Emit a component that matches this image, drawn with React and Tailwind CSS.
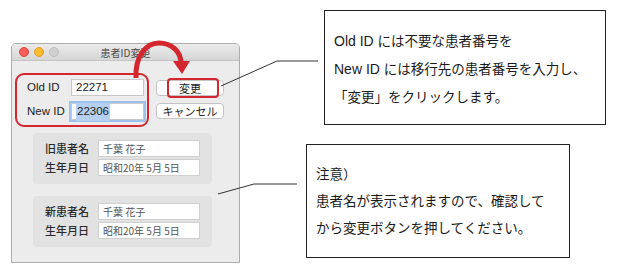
const jp = "font-['Noto_Sans_CJK_JP','Noto_Sans',sans-serif]";
const latin = "font-['Liberation_Sans','Noto_Sans_CJK_JP',sans-serif]";

function Field({ children, className = "" }) {
  return (
    <div
      className={`h-[17px] bg-white border border-[#c9c9c9] flex items-center pl-[4px] text-[11.5px] text-[#222] ${className}`}
    >
      {children}
    </div>
  );
}

function PatientGroup({ label }) {
  return (
    <div className="ml-[21px] w-[179px] h-[51px] rounded-[4px] bg-[#e2e2e2] pt-[7px] pl-[12px] flex flex-col gap-[2px]">
      {[
        [label, "千葉 花子"],
        ["生年月日", "昭和20年 5月 5日"],
      ].map(([name, value]) => (
        <div key={name} className="flex items-center">
          <span className={`w-[53px] text-[11px] font-medium text-[#2a2a2a] ${jp}`}>{name}</span>
          <div className={`w-[102px] h-[17px] bg-white border border-[#d0d0d0] flex items-center pl-[4px] text-[10px] text-[#555] ${jp}`}>
            {value}
          </div>
        </div>
      ))}
    </div>
  );
}

export default function App() {
  return (
    <div className={`relative w-[617px] h-[273px] bg-white overflow-hidden ${jp}`}>
      {/* Window */}
      <div className="pt-[43px] pl-[11px]">
        <div className="w-[229px] h-[220px] border border-[#adadad] rounded-t-[5px] bg-[#ececec] flex flex-col">
          <div className="relative h-[17px] border-b border-[#c4c4c4] bg-gradient-to-b from-[#ebebeb] to-[#d6d6d6] rounded-t-[4px] flex items-center">
            <div className="flex gap-[5px] pl-[7px]">
              <span className="w-[10px] h-[10px] rounded-full bg-[#fc5f57] border border-[#e2463f]" />
              <span className="w-[10px] h-[10px] rounded-full bg-[#fdbc2e] border border-[#dfa023]" />
              <span className="w-[10px] h-[10px] rounded-full bg-[#d0d0d0] border border-[#bdbdbd]" />
            </div>
            <span className="absolute inset-0 flex items-center justify-center text-[10px] text-[#4a4a4a]">
              患者ID変更
            </span>
          </div>

          <div className="flex">
            {/* ID inputs */}
            <div className="ml-[3px] mt-[12px] w-[134px] h-[54px] border-2 border-[#d3262e] rounded-[9px] pt-[4px] pl-[10px] flex flex-col gap-[7px]">
              <div className="flex items-center">
                <span className={`w-[44px] text-[11.5px] text-[#222] ${latin}`}>Old ID</span>
                <Field className={`w-[73px] ${latin}`}>22271</Field>
              </div>
              <div className="flex items-center">
                <span className={`w-[44px] text-[11.5px] text-[#222] ${latin}`}>New ID</span>
                <Field className={`w-[73px] border-[#7fa9df] ring-2 ring-[#9dc0ec] ${latin}`}>
                  <span className="bg-[#b5d0f0] px-[1px]">22306</span>
                </Field>
              </div>
            </div>

            {/* Buttons */}
            <div className="ml-[7px] mt-[19px] flex flex-col gap-[7px]">
              <div className="relative w-[68px] h-[16px] bg-white border border-[#c4c4c4] rounded-[4px] flex items-center justify-center text-[11px] text-[#222]">
                変更
                <span className="absolute left-[10px] top-[-3px] w-[52px] h-[20px] border-2 border-[#d3262e] rounded-[4px]" />
              </div>
              <div className="w-[68px] h-[16px] bg-white border border-[#c4c4c4] rounded-[4px] flex items-center justify-center text-[11px] text-[#222]">
                キャンセル
              </div>
            </div>
          </div>

          <div className="mt-[6px] flex flex-col gap-[12px]">
            <PatientGroup label="旧患者名" />
            <PatientGroup label="新患者名" />
          </div>
        </div>
      </div>

      {/* Callouts */}
      <div className="absolute left-[324px] top-[10px] w-[282px] h-[115px] border border-[#222] pt-[16px] pl-[9px] text-[13.5px] leading-[27px] text-[#1a1a1a]">
        <p>
          <span className={`text-[14px] ${latin}`}>Old ID </span>には不要な患者番号を
        </p>
        <p>
          <span className={`text-[14px] ${latin}`}>New ID </span>には移行先の患者番号を入力し、
        </p>
        <p>「変更」をクリックします。</p>
      </div>

      <div className="absolute left-[306px] top-[144px] w-[264px] h-[114px] border border-[#222] pt-[15px] pl-[9px] text-[13.5px] leading-[27px] text-[#1a1a1a]">
        <p>注意）</p>
        <p>患者名が表示されますので、確認して</p>
        <p>から変更ボタンを押してください。</p>
      </div>

      {/* Leader lines and arrow */}
      <svg className="absolute inset-0 pointer-events-none" width="617" height="273" viewBox="0 0 617 273">
        <polyline points="221,86 277,61 318,61" fill="none" stroke="#333" strokeWidth="1" />
        <polyline points="218,194 254,184 297,184" fill="none" stroke="#333" strokeWidth="1" />
        <path d="M136 78 C135 56 146 43 159 43 C172 43 181 52 181 63" fill="none" stroke="#d3262e" strokeWidth="5" />
        <polygon points="173,61 190,61 182,74" fill="#d3262e" />
      </svg>
    </div>
  );
}
